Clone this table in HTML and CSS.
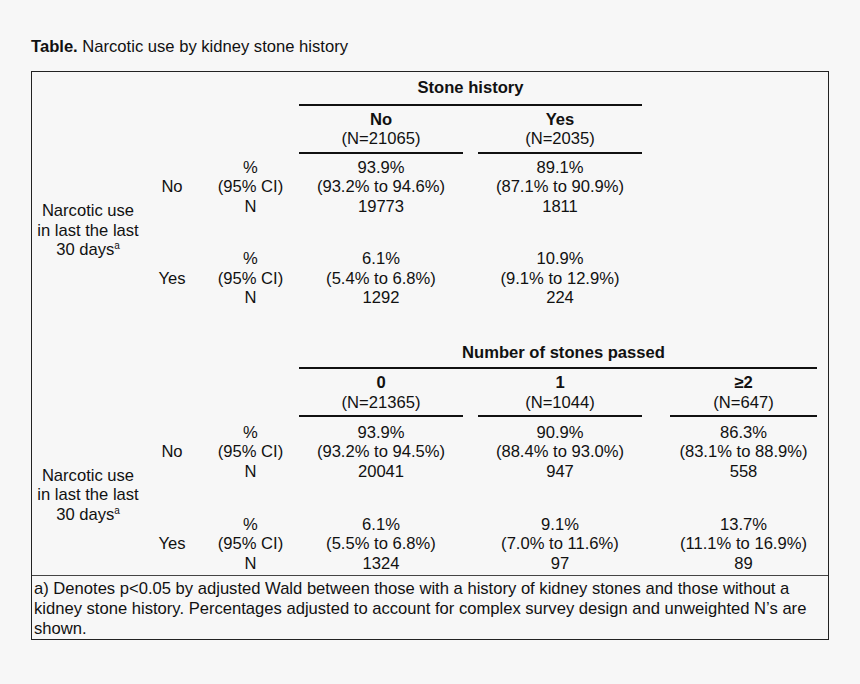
FILE: index.html
```html
<!DOCTYPE html>
<html>
<head>
<meta charset="utf-8">
<link rel="stylesheet" href="styles.css">
</head>
<body>
<div class="page">
  <div class="caption"><b>Table.</b> Narcotic use by kidney stone history</div>
  <div class="box">
    <div class="sec sec1">
      <div class="grp-title span-ab">Stone history</div>
      <div class="rule span-ab"></div>
      <div class="colhdr ca"><b>No</b><br>(N=21065)</div>
      <div class="colhdr cb"><b>Yes</b><br>(N=2035)</div>
      <div class="rule small ca"></div>
      <div class="rule small cb"></div>

      <div class="narc">Narcotic use<br>in last the last<br>30 days<sup>a</sup></div>

      <div class="lab r1">No</div>
      <div class="stat r1">%<br>(95% CI)<br>N</div>
      <div class="val r1 ca">93.9%<br>(93.2% to 94.6%)<br>19773</div>
      <div class="val r1 cb">89.1%<br>(87.1% to 90.9%)<br>1811</div>

      <div class="lab r2">Yes</div>
      <div class="stat r2">%<br>(95% CI)<br>N</div>
      <div class="val r2 ca">6.1%<br>(5.4% to 6.8%)<br>1292</div>
      <div class="val r2 cb">10.9%<br>(9.1% to 12.9%)<br>224</div>
    </div>

    <div class="sec sec2">
      <div class="grp-title span-all">Number of stones passed</div>
      <div class="rule span-abc"></div>
      <div class="colhdr ca"><b>0</b><br>(N=21365)</div>
      <div class="colhdr cb"><b>1</b><br>(N=1044)</div>
      <div class="colhdr cc"><b>≥2</b><br>(N=647)</div>
      <div class="rule small ca"></div>
      <div class="rule small cb"></div>
      <div class="rule small cc"></div>

      <div class="narc">Narcotic use<br>in last the last<br>30 days<sup>a</sup></div>

      <div class="lab r1">No</div>
      <div class="stat r1">%<br>(95% CI)<br>N</div>
      <div class="val r1 ca">93.9%<br>(93.2% to 94.5%)<br>20041</div>
      <div class="val r1 cb">90.9%<br>(88.4% to 93.0%)<br>947</div>
      <div class="val r1 cc">86.3%<br>(83.1% to 88.9%)<br>558</div>

      <div class="lab r2">Yes</div>
      <div class="stat r2">%<br>(95% CI)<br>N</div>
      <div class="val r2 ca">6.1%<br>(5.5% to 6.8%)<br>1324</div>
      <div class="val r2 cb">9.1%<br>(7.0% to 11.6%)<br>97</div>
      <div class="val r2 cc">13.7%<br>(11.1% to 16.9%)<br>89</div>
    </div>

    <div class="foot">a) Denotes p&lt;0.05 by adjusted Wald between those with a history of kidney stones and those without a kidney stone history. Percentages adjusted to account for complex survey design and unweighted N’s are shown.</div>
  </div>
</div>
</body>
</html>
```

FILE: styles.css
```css
html, body {
  margin: 0;
  padding: 0;
  background: #f7f7f7;
}
body {
  font-family: "Liberation Sans", Arial, sans-serif;
  font-size: 16.6px;
  line-height: 19.5px;
  color: #111;
}
.page {
  padding: 37px 0 0 31px;
  width: 798px;
}
.caption {
  margin-bottom: 14.5px;
}
.box {
  border: 1px solid #222;
}
.sec {
  display: grid;
  grid-template-columns: 110px 60px 97px 164px 15px 164px 28px 147px 1fr;
  text-align: center;
}
.sec1 { padding-top: 6px; }
.sec2 { padding-top: 35px; padding-bottom: 1.5px; }
.grp-title {
  font-weight: bold;
  grid-row: 1;
}
.span-ab { grid-column: 4 / 7; }
.span-abc { grid-column: 4 / 9; }
.span-all { grid-column: 4 / 10; }
.rule {
  height: 2px;
  background: #111;
  grid-row: 2;
  margin-top: 6px;
}
.sec2 .rule { margin-top: 5px; }
.rule.small {
  grid-row: 4;
  margin-top: 3px;
}
.colhdr {
  grid-row: 3;
  margin-top: 4px;
}
.ca { grid-column: 4; }
.cb { grid-column: 6; }
.cc { grid-column: 8; }
.narc {
  grid-column: 1;
  grid-row: 5 / 7;
  align-self: center;
  padding-left: 2px;
}
.narc sup {
  font-size: 10px;
  line-height: 0;
  vertical-align: 6px;
}
.lab {
  grid-column: 2;
  align-self: center;
}
.stat { grid-column: 3; }
.r1 { grid-row: 5; margin-top: 4px; }
.sec2 .r1 { margin-top: 5.5px; }
.r2 { grid-row: 6; margin-top: 33px; }
.sec2 .r2 { margin-top: 33.5px; }
.lab.r1, .lab.r2 { margin-top: 0; }
.lab.r2 { padding-top: 33px; }
.sec2 .lab.r2 { padding-top: 33.5px; }
.lab.r1 { padding-top: 4px; }
.sec2 .lab.r1 { padding-top: 5.5px; }
.foot {
  border-top: 1px solid #444;
  padding: 3px 4px 0 2px;
  line-height: 20px;
  text-align: left;
}
```
